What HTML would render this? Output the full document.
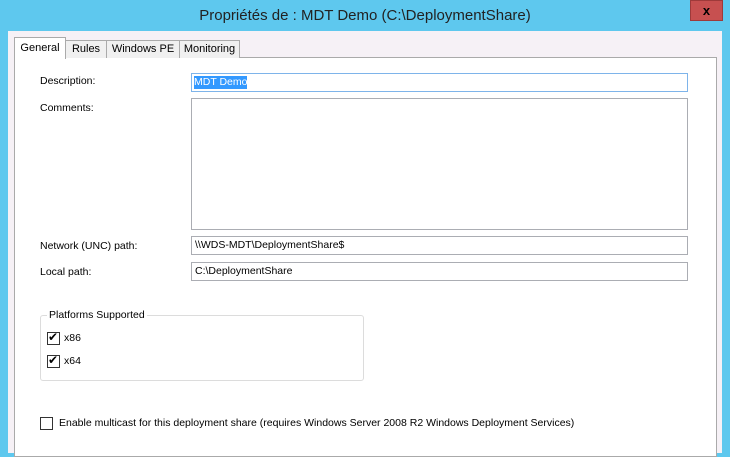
<!DOCTYPE html><html><head><style>
body{margin:0;width:730px;height:453px;overflow:hidden;background:#5ec8ee;font-family:"Liberation Sans",sans-serif;font-size:10.5px;color:#000;position:relative}
.a{position:absolute}
.in{position:absolute;background:#fff;border:1px solid #abadb3;box-sizing:border-box}
.cb{position:absolute;width:13px;height:13px;border:1px solid #333;box-sizing:border-box;background:#fff}
.tab{position:absolute;top:40px;height:18px;border:1px solid #aaa;border-bottom:none;background:#f0f0f0;box-sizing:border-box;text-align:center;line-height:17px;font-size:11px}
</style></head><body>
<div class="a" style="left:0;top:0;width:730px;height:31px;text-align:center;line-height:31px;font-size:15px;color:#222">Propriétés de : MDT Demo (C:\DeploymentShare)</div>
<div class="a" style="left:690px;top:0;width:33px;height:21px;background:#c75050;border:1px solid #9e3a3a;box-sizing:border-box;color:#000;font-weight:bold;text-align:center;line-height:19px;font-size:13px">x</div>
<div class="a" style="left:8px;top:31px;width:714px;height:422px;background:#f6f1f6"></div>
<div class="a" style="left:14px;top:57px;width:703px;height:400px;background:#fff;border:1px solid #aaa;box-sizing:border-box"></div>
<div class="tab" style="left:65px;width:42px">Rules</div>
<div class="tab" style="left:106px;width:74px">Windows PE</div>
<div class="tab" style="left:179px;width:61px">Monitoring</div>
<div class="tab" style="left:14px;top:37px;height:22px;width:52px;background:#fff;line-height:20px">General</div>
<div class="a" style="left:40px;top:75px">Description:</div>
<div class="in" style="left:191px;top:73px;width:497px;height:19px;border-color:#7eb4ea"><span style="background:#3399ff;color:#fff;margin:2px 0 0 2px;display:inline-block;line-height:13px">MDT Demo</span></div>
<div class="a" style="left:40px;top:102px">Comments:</div>
<div class="in" style="left:191px;top:98px;width:497px;height:132px"></div>
<div class="a" style="left:40px;top:240px">Network (UNC) path:</div>
<div class="in" style="left:191px;top:236px;width:497px;height:19px;padding:2px 3px">\\WDS-MDT\DeploymentShare$</div>
<div class="a" style="left:40px;top:266px">Local path:</div>
<div class="in" style="left:191px;top:262px;width:497px;height:19px;padding:2px 3px">C:\DeploymentShare</div>
<div class="a" style="left:40px;top:315px;width:324px;height:66px;border:1px solid #dcdcdc;border-radius:3px;box-sizing:border-box"></div>
<div class="a" style="left:47px;top:309px;background:#fff;padding:0 2px">Platforms Supported</div>
<div class="cb" style="left:47px;top:332px"><span style="position:absolute;left:0;top:-3px;font-size:12px">✔</span></div><div class="a" style="left:64px;top:332px">x86</div>
<div class="cb" style="left:47px;top:355px"><span style="position:absolute;left:0;top:-3px;font-size:12px">✔</span></div><div class="a" style="left:64px;top:355px">x64</div>
<div class="cb" style="left:40px;top:417px"></div>
<div class="a" style="left:59px;top:417px">Enable multicast for this deployment share (requires Windows Server 2008 R2 Windows Deployment Services)</div>
</body></html>
